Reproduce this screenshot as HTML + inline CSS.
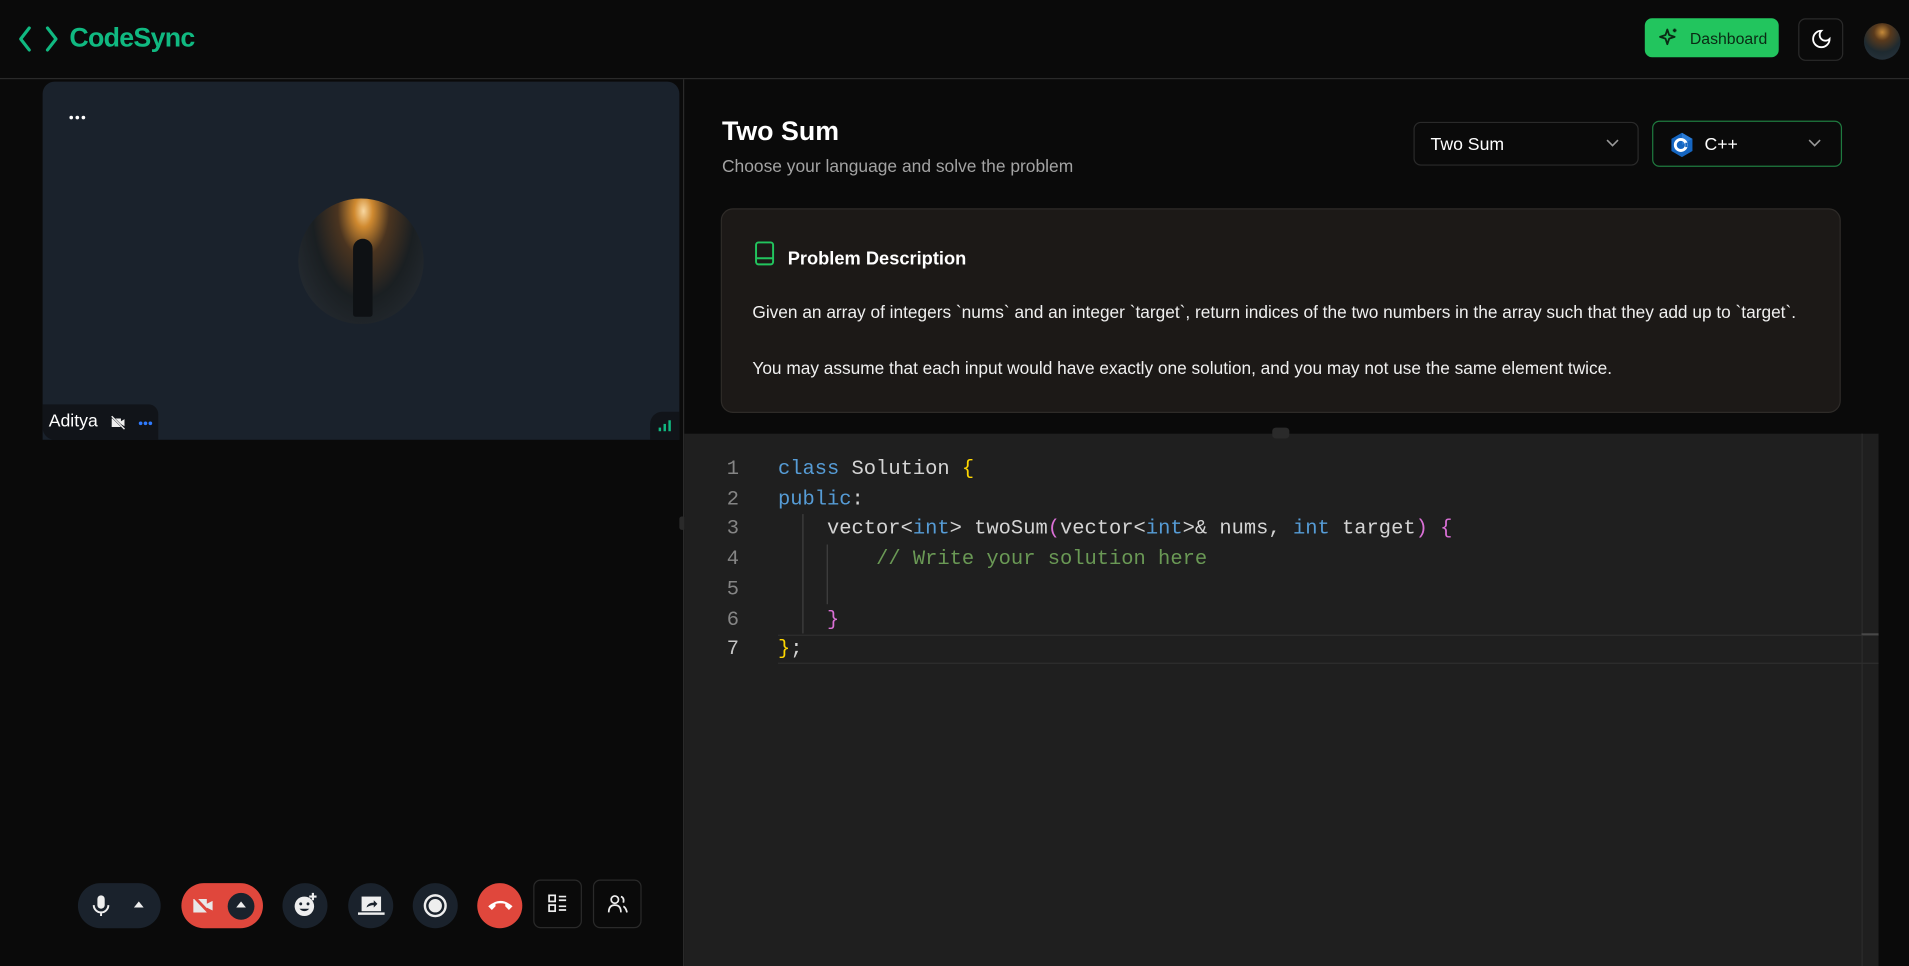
<!DOCTYPE html>
<html><head><meta charset="utf-8"><style>
html,body{margin:0;padding:0;background:#0a0a0a;overflow:hidden;width:1909px;height:966px}
#w{position:absolute;left:0;top:0;width:1568px;height:793px;transform:scale(1.21747,1.21816);transform-origin:0 0;font-family:"Liberation Sans",sans-serif;color:#fff;background:#0a0a0a}
.a{position:absolute}
.code{font-family:"Liberation Mono",monospace;font-size:16.8px;white-space:pre;color:#d4d4d4}
.ln{width:30px;text-align:right;color:#858585}
.k{color:#569cd6}.b{color:#ffd700}.p{color:#da70d6}.c{color:#6a9955}
.circ{border-radius:50%;background:#1a222c;width:37px;height:37px;top:725px}
.sq{border:1px solid #2a2a2a;border-radius:6px;width:40px;height:40px;top:722px;box-sizing:border-box}
.dot{position:absolute;width:3px;height:3px;border-radius:50%}
</style></head><body><div id="w">
<div class="a" style="left:0;top:64px;width:1568px;height:1px;background:#2a2a2a"></div>
<svg class="a" style="left:15px;top:21px" width="34" height="22" viewBox="0 0 34 22"><path d="M9 2 L2 11 L9 20 M24 2 L31 11 L24 20" stroke="#10b981" stroke-width="2.6" fill="none" stroke-linecap="round" stroke-linejoin="round"/></svg>
<div class="a" style="left:57px;top:18px;font-size:22px;font-weight:bold;color:#10b981;letter-spacing:-0.6px">CodeSync</div>
<div class="a" style="left:1351px;top:15px;width:110px;height:32px;background:#22c55e;border-radius:6px"></div>
<svg class="a" style="left:1362px;top:22px" width="18" height="18" viewBox="0 0 24 24"><path d="M10 3 L12 9 L18 11 L12 13 L10 19 L8 13 L2 11 L8 9 Z M18 2 V6 M16 4 H20" stroke="#0a2a14" stroke-width="2" fill="none" stroke-linejoin="round"/></svg>
<div class="a" style="left:1388px;top:24px;font-size:13px;color:#0a2a14">Dashboard</div>
<div class="a" style="left:1477px;top:15px;width:37px;height:35px;border:1px solid #2a2a2a;border-radius:6px;box-sizing:border-box"></div>
<svg class="a" style="left:1487px;top:23px" width="18" height="18" viewBox="0 0 24 24"><path d="M12 3a6 6 0 0 0 9 9 9 9 0 1 1-9-9Z" stroke="#fff" stroke-width="2" fill="none"/></svg>
<div class="a" style="left:1531px;top:19px;width:30px;height:30px;border-radius:50%;background:radial-gradient(circle at 50% 25%,#c58a3a 0,#5a3a1c 25%,#1e2a30 60%,#2a3540 100%)"></div>
<div class="a" style="left:561px;top:65px;width:1px;height:728px;background:#2a2a2a"></div>
<div class="a" style="left:35px;top:67px;width:523px;height:294px;background:#1a222c;border-radius:10px 10px 0 0"></div>
<div class="dot" style="left:57px;top:95px;background:#fff"></div><div class="dot" style="left:62px;top:95px;background:#fff"></div><div class="dot" style="left:67px;top:95px;background:#fff"></div>
<div class="a" style="left:245px;top:163px;width:103px;height:103px;border-radius:50%;background:radial-gradient(ellipse at 52% 10%,#f8d7a0 0,#d08a30 10%,#4a3420 28%,#1a1f22 55%,#2a3038 100%)"></div>
<div class="a" style="left:290px;top:196px;width:16px;height:64px;background:#0e1114;border-radius:8px 8px 2px 2px"></div>
<div class="a" style="left:35px;top:332px;width:95px;height:29px;background:#111419;border-radius:0 8px 0 10px"></div>
<div class="a" style="left:40px;top:338px;font-size:14.5px">Aditya</div>
<svg class="a" style="left:90px;top:340px" width="14" height="14" viewBox="0 0 24 24"><path d="M3 6h13v12H3z M16 10l5-3v10l-5-3" fill="#eee"/><path d="M2 2L22 22" stroke="#111419" stroke-width="3"/><path d="M3 3L21 21" stroke="#eee" stroke-width="2"/></svg>
<div class="dot" style="left:114px;top:346px;background:#2f7bff"></div><div class="dot" style="left:118px;top:346px;background:#2f7bff"></div><div class="dot" style="left:122px;top:346px;background:#2f7bff"></div>
<div class="a" style="left:534px;top:338px;width:24px;height:23px;background:#111419;border-radius:10px 0 0 0"></div>
<svg class="a" style="left:540px;top:344px" width="12" height="11"><rect x="1" y="7" width="2" height="3" fill="#10b981"/><rect x="5" y="4" width="2" height="6" fill="#10b981"/><rect x="9" y="1" width="2" height="9" fill="#10b981"/></svg>
<div class="a" style="left:558px;top:424px;width:5px;height:11px;background:#2a2a2a;border-radius:2px"></div>
<div class="a" style="left:64px;top:725px;width:68px;height:37px;background:#1a222c;border-radius:19px"></div>
<svg class="a" style="left:75px;top:734px" width="16" height="19" viewBox="0 0 16 19"><rect x="5" y="1" width="6" height="11" rx="3" fill="#eee"/><path d="M2 9a6 6 0 0 0 12 0 M8 15v3" stroke="#eee" stroke-width="1.6" fill="none"/></svg>
<svg class="a" style="left:110px;top:740px" width="8" height="6"><path d="M0 5L4 0L8 5Z" fill="#eee"/></svg>
<div class="a" style="left:149px;top:725px;width:67px;height:37px;background:#e0473c;border-radius:19px"></div>
<svg class="a" style="left:158px;top:735px" width="19" height="17" viewBox="0 0 24 20"><path d="M1 3h14v14H1z M15 8l6-3v10l-6-3" fill="#e8e8e8"/><path d="M1 0L20 20" stroke="#e0473c" stroke-width="3"/></svg>
<div class="a" style="left:187px;top:733px;width:22px;height:22px;border-radius:50%;background:#1a222c"></div>
<svg class="a" style="left:194px;top:740px" width="8" height="6"><path d="M0 5L4 0L8 5Z" fill="#eee"/></svg>
<div class="a circ" style="left:232px"></div>
<svg class="a" style="left:240px;top:732px" width="22" height="22" viewBox="0 0 22 22"><circle cx="10" cy="12" r="8" fill="#eee"/><circle cx="7" cy="10" r="1.2" fill="#1a222c"/><circle cx="13" cy="10" r="1.2" fill="#1a222c"/><path d="M6 14q4 4 8 0" fill="#1a222c"/><path d="M17 1v6M14 4h6" stroke="#eee" stroke-width="1.8"/></svg>
<div class="a circ" style="left:286px"></div>
<svg class="a" style="left:294px;top:735px" width="22" height="17" viewBox="0 0 22 17"><rect x="3" y="1" width="16" height="12" fill="#eee"/><rect x="0" y="14" width="22" height="2" fill="#eee"/><path d="M7 10q1-4 6-4V4l3 3-3 3V8q-3 0-6 2" fill="#1a222c"/></svg>
<div class="a circ" style="left:339px"></div>
<div class="a" style="left:348px;top:734px;width:15px;height:15px;border:2px solid #eee;border-radius:50%"></div>
<div class="a" style="left:352px;top:738px;width:11px;height:11px;background:#eee;border-radius:50%"></div>
<div class="a circ" style="left:392px;background:#e0473c"></div>
<svg class="a" style="left:400px;top:737px" width="22" height="12" viewBox="0 0 22 12"><path d="M1 7q10-9 20 0l-3 3-3-3v-2q-4-1-8 0v2l-3 3z" fill="#fff"/></svg>
<div class="a sq" style="left:438px"></div>
<svg class="a" style="left:450px;top:734px" width="16" height="16" viewBox="0 0 16 16" fill="none" stroke="#eee" stroke-width="1.4"><rect x="1" y="1" width="5" height="5"/><rect x="1" y="9" width="5" height="5"/><path d="M9 2h6M9 5h6M9 10h6M9 13h6"/></svg>
<div class="a sq" style="left:487px"></div>
<svg class="a" style="left:499px;top:734px" width="17" height="16" viewBox="0 0 17 16" fill="none" stroke="#eee" stroke-width="1.4"><circle cx="6" cy="4.5" r="3"/><path d="M1 15q0-6 5-6t5 6M11 2q3 1 2 5M13 10q2 1 3 5"/></svg>
<div class="a" style="left:593px;top:95px;font-size:22px;font-weight:bold">Two Sum</div>
<div class="a" style="left:593px;top:129px;font-size:14.3px;color:#a3a3a3">Choose your language and solve the problem</div>
<div class="a" style="left:1161px;top:100px;width:185px;height:36px;border:1px solid #2a2a2a;border-radius:6px;box-sizing:border-box"></div>
<div class="a" style="left:1175px;top:111px;font-size:14.5px">Two Sum</div>
<svg class="a" style="left:1319px;top:114px" width="11" height="7"><path d="M1 1l4.5 4.5L10 1" stroke="#999" stroke-width="1.3" fill="none"/></svg>
<div class="a" style="left:1357px;top:99px;width:156px;height:38px;border:1.5px solid #1f7a3f;border-radius:6px;box-sizing:border-box"></div>
<svg class="a" style="left:1372px;top:109px" width="19" height="20" viewBox="0 0 20 22"><path d="M10 0l9.5 5.5v11L10 22 0.5 16.5v-11z" fill="#1565c0"/><path d="M10 0l9.5 5.5L10 11z" fill="#2a7bd6"/><circle cx="9" cy="11" r="5" fill="none" stroke="#fff" stroke-width="2.6"/><path d="M13 9h2v4h-2z" fill="#1565c0"/></svg>
<div class="a" style="left:1400px;top:111px;font-size:14.5px">C++</div>
<svg class="a" style="left:1485px;top:114px" width="11" height="7"><path d="M1 1l4.5 4.5L10 1" stroke="#999" stroke-width="1.3" fill="none"/></svg>
<div class="a" style="left:592px;top:171px;width:920px;height:168px;background:#1c1917;border:1px solid #2e2b28;border-radius:10px;box-sizing:border-box"></div>
<svg class="a" style="left:619px;top:198px" width="18" height="20" viewBox="0 0 18 20" fill="none" stroke="#22c55e" stroke-width="1.6"><rect x="2" y="1" width="14" height="18" rx="2"/><path d="M2 14h14"/></svg>
<div class="a" style="left:647px;top:204px;font-size:15px;font-weight:bold">Problem Description</div>
<div class="a" style="left:618px;top:249px;font-size:14.2px;color:#f0f0f0">Given an array of integers `nums` and an integer `target`, return indices of the two numbers in the array such that they add up to `target`.</div>
<div class="a" style="left:618px;top:295px;font-size:14.2px;color:#f0f0f0">You may assume that each input would have exactly one solution, and you may not use the same element twice.</div>
<div class="a" style="left:562px;top:356px;width:981px;height:437px;background:#1f1f1f"></div>
<div class="a" style="left:1529px;top:356px;width:1px;height:437px;background:#2c2c2c"></div>
<div class="a" style="left:1529px;top:520px;width:14px;height:2px;background:#555"></div>
<div class="a" style="left:1045px;top:351px;width:14px;height:9px;background:#2a2a2a;border-radius:3px"></div>
<div class="a" style="left:639px;top:521px;width:904px;height:24px;border-top:1px solid #2e2e2e;border-bottom:1px solid #2e2e2e;box-sizing:border-box"></div>
<div class="a" style="left:659px;top:422px;width:1px;height:98px;background:#404040"></div>
<div class="a" style="left:679px;top:447px;width:1px;height:49px;background:#404040"></div>
<div class="a code" style="left:577px;top:374px;line-height:24.7px"><div class="ln">1</div><div class="ln">2</div><div class="ln">3</div><div class="ln">4</div><div class="ln">5</div><div class="ln">6</div><div class="ln" style="color:#c6c6c6">7</div></div>
<div class="a code" style="left:639px;top:374px;line-height:24.7px"><span class="k">class</span> Solution <span class="b">{</span>
<span class="k">public</span>:
    vector&lt;<span class="k">int</span>&gt; twoSum<span class="p">(</span>vector&lt;<span class="k">int</span>&gt;&amp; nums, <span class="k">int</span> target<span class="p">)</span> <span class="p">{</span>
        <span class="c">// Write your solution here</span>

    <span class="p">}</span>
<span class="b">}</span>;</div>
</div></body></html>
